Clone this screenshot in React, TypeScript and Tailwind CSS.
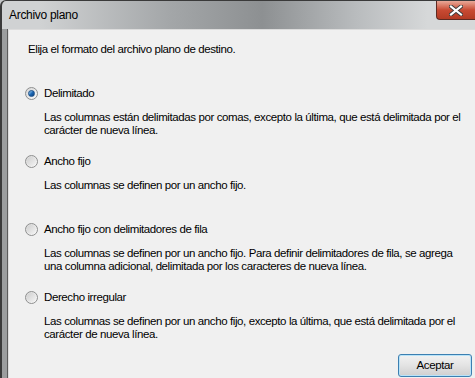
import React, { useState } from 'react'

type Option = {
  id: string
  label: string
  lines: string[]
}

const options: Option[] = [
  {
    id: 'delimited',
    label: 'Delimitado',
    lines: [
      'Las columnas están delimitadas por comas, excepto la última, que está delimitada por el',
      'carácter de nueva línea.',
    ],
  },
  {
    id: 'fixed',
    label: 'Ancho fijo',
    lines: ['Las columnas se definen por un ancho fijo.'],
  },
  {
    id: 'fixedRows',
    label: 'Ancho fijo con delimitadores de fila',
    lines: [
      'Las columnas se definen por un ancho fijo. Para definir delimitadores de fila, se agrega',
      'una columna adicional, delimitada por los caracteres de nueva línea.',
    ],
  },
  {
    id: 'ragged',
    label: 'Derecho irregular',
    lines: [
      'Las columnas se definen por un ancho fijo, excepto la última, que está delimitada por el',
      'carácter de nueva línea.',
    ],
  },
]

function Radio({ checked }: { checked: boolean }) {
  return (
    <span className="w-[13px] h-[13px] rounded-full border border-[#8e8f8f] bg-gradient-to-br from-[#d6d6d6] to-[#fbfbfb] flex items-center justify-center shrink-0">
      {checked ? (
        <span className="w-[7px] h-[7px] rounded-full bg-gradient-to-br from-[#a9dcf6] via-[#1c68b5] to-[#0d3e7c] border border-[#1a4f88]" />
      ) : (
        <span className="w-[9px] h-[9px] rounded-full bg-gradient-to-br from-[#cfcfcf] to-[#f4f4f4]" />
      )}
    </span>
  )
}

export default function App() {
  const [selected, setSelected] = useState('delimited')

  return (
    <div
      className="w-[475px] h-[378px] overflow-hidden flex flex-col bg-[#c4c6c8] text-[11.5px] tracking-[-0.4px] text-black"
      style={{ fontFamily: '"Liberation Sans", Arial, sans-serif' }}
    >
      {/* title bar */}
      <div className="h-[29px] flex items-start shrink-0 border-l-2 border-t border-[#3a3a3a] rounded-tl-[6px] bg-[linear-gradient(to_right,#d0d2d3_8%,#a4a7a9_35%,#8d9092_55%,#b9bcbe_75%,#d6d8d9_90%)]">
        <span className="pl-[7px] pt-[7px] leading-[15px] text-[12px] tracking-[-0.3px]">Archivo plano</span>
        <div className="ml-auto h-[19px] w-[39px] rounded-bl-[4px] border-l border-b border-[#5e2a22] bg-gradient-to-b from-[#e8a898] via-[#c84a33] to-[#b33b24] flex items-center justify-center">
          <svg width="14" height="11" viewBox="0 0 14 11">
            <path d="M2 1.5 L12 9.5 M12 1.5 L2 9.5" stroke="#3b3b3b" strokeWidth="4" strokeLinecap="square" />
            <path d="M2 1.5 L12 9.5 M12 1.5 L2 9.5" stroke="#ffffff" strokeWidth="2.2" strokeLinecap="square" />
          </svg>
        </div>
      </div>

      {/* body */}
      <div className="flex-1 flex min-h-0">
        <div className="w-[8px] shrink-0 flex">
          <div className="w-[2px] bg-[#3a3a3a]" />
          <div className="w-[5px] bg-[#9b9d9e]" />
          <div className="w-[1px] bg-[#5a5a5a]" />
        </div>
        <div className="flex-1 bg-[#f0f0f0] border-t border-l border-[#dcdcdc] flex flex-col pl-[19px] pt-[11px] whitespace-nowrap">
          <div className="leading-[16px] h-[16px]">Elija el formato del archivo plano de destino.</div>

          <div className="mt-[28px] flex flex-col">
            {options.map((o, i) => (
              <div key={o.id} className={i < options.length - 1 ? 'h-[68px]' : ''}>
                <label className="h-[16px] -ml-[3px] flex items-center gap-[6px] cursor-default" onClick={() => setSelected(o.id)}>
                  <Radio checked={selected === o.id} />
                  <span className="leading-[16px]">{o.label}</span>
                </label>
                <div className="mt-[10px] pl-[16px] leading-[13px]">
                  {o.lines.map((l) => (
                    <div key={l}>{l}</div>
                  ))}
                </div>
              </div>
            ))}
          </div>

          <div className="flex justify-end mt-[13px] pr-[3px]">
            <button className="w-[74px] h-[23px] rounded-[3px] border border-[#3c7fb1] bg-gradient-to-b from-[#f2f2f2] via-[#e3e3e3] to-[#cfcfcf] shadow-[inset_0_0_0_1px_#b8e3f8] leading-[15px]">
              Aceptar
            </button>
          </div>
        </div>
      </div>
    </div>
  )
}
